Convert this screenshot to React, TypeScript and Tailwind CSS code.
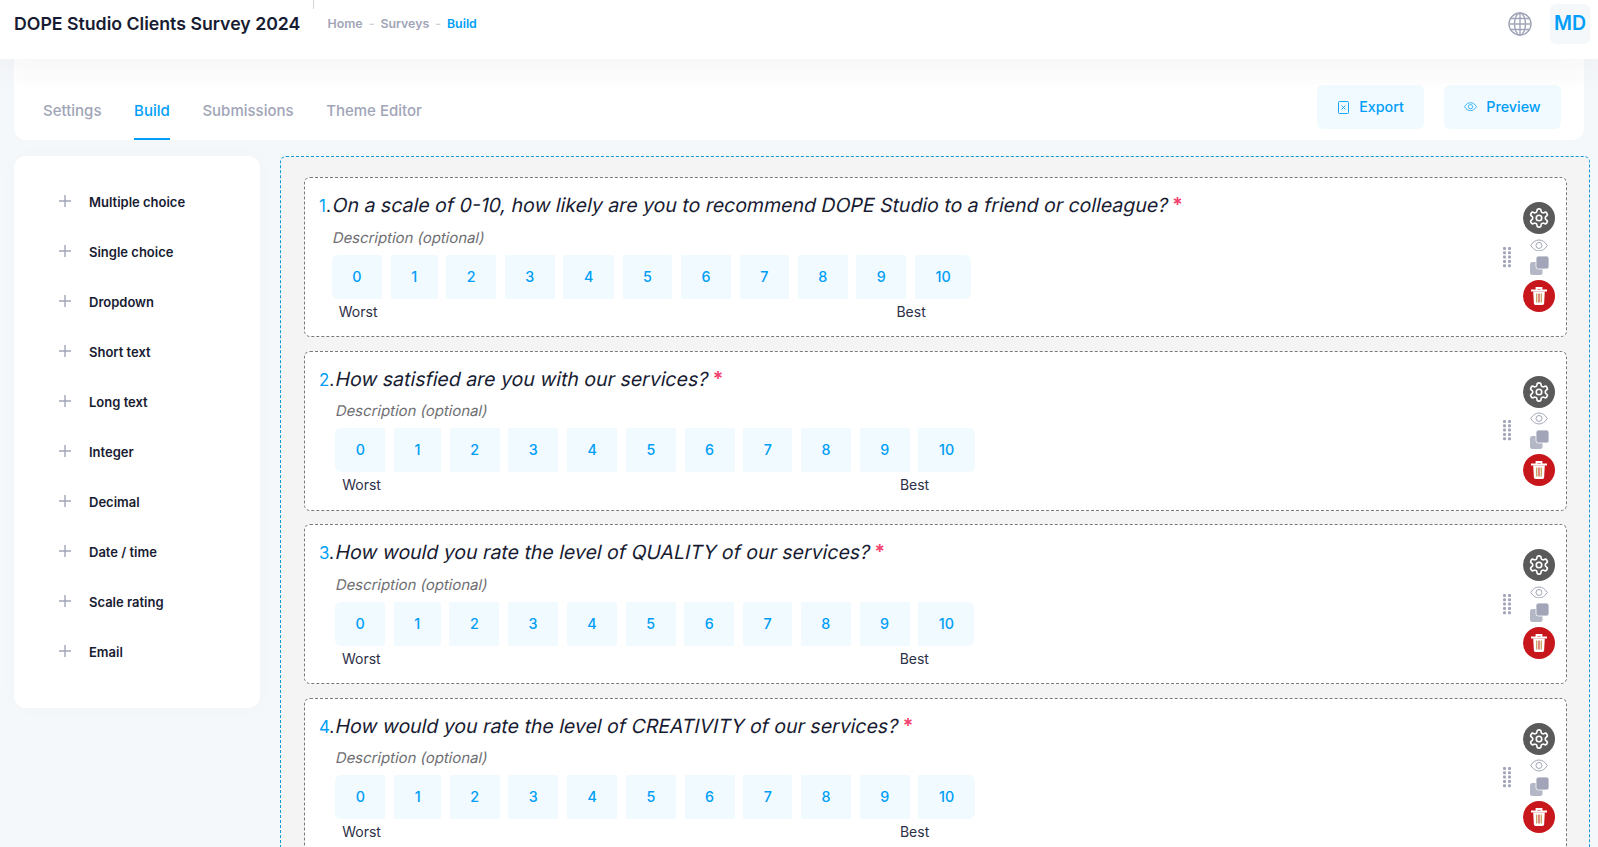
import React from "react";

const fields = ["Multiple choice","Single choice","Dropdown","Short text","Long text","Integer","Decimal","Date / time","Scale rating","Email"];
const questions = [
  "On a scale of 0-10, how likely are you to recommend DOPE Studio to a friend or colleague?",
  "How satisfied are you with our services?",
  "How would you rate the level of QUALITY of our services?",
  "How would you rate the level of CREATIVITY of our services?",
];
const scale = [0,1,2,3,4,5,6,7,8,9,10];

function Globe() {
  return (
    <svg width="24" height="24" viewBox="0 0 24 24" fill="none" stroke="#a1a5b7" strokeWidth="1.4">
      <circle cx="12" cy="12" r="11" />
      <ellipse cx="12" cy="12" rx="5.5" ry="11" />
      <path d="M12 1v22M1 12h22M2.5 6.5h19M2.5 17.5h19" />
    </svg>
  );
}
function Eye({ size = 18, color = "#a1a5b7" }: { size?: number; color?: string }) {
  return (
    <svg width={size} height={size * 0.72} viewBox="0 0 18 13" fill="none" stroke={color} strokeWidth="1">
      <path d="M.7 6.5C3 2.8 5.8 1 9 1s6 1.8 8.3 5.5C15 10.2 12.2 12 9 12S3 10.2.7 6.5z" />
      <circle cx="9" cy="6.5" r="3" />
    </svg>
  );
}
function Copy() {
  return (
    <svg width="19" height="19" viewBox="0 0 19 19">
      <rect x="0" y="6" width="12.5" height="13" rx="2.5" fill="#a1a5b7" opacity="0.8" />
      <rect x="6" y="0" width="13" height="13" rx="2.5" fill="#a1a5b7" stroke="#fff" strokeWidth="0.8" />
    </svg>
  );
}
function Gear() {
  return (
    <svg width="22" height="22" viewBox="0 0 24 24" fill="none" stroke="#fff" strokeWidth="1.8" strokeLinecap="round" strokeLinejoin="round">
      <path d="M12.22 2h-.44a2 2 0 0 0-2 2v.18a2 2 0 0 1-1 1.73l-.43.25a2 2 0 0 1-2 0l-.15-.08a2 2 0 0 0-2.73.73l-.22.38a2 2 0 0 0 .73 2.73l.15.1a2 2 0 0 1 1 1.72v.51a2 2 0 0 1-1 1.74l-.15.09a2 2 0 0 0-.73 2.73l.22.38a2 2 0 0 0 2.73.73l.15-.08a2 2 0 0 1 2 0l.43.25a2 2 0 0 1 1 1.73V20a2 2 0 0 0 2 2h.44a2 2 0 0 0 2-2v-.18a2 2 0 0 1 1-1.73l.43-.25a2 2 0 0 1 2 0l.15.08a2 2 0 0 0 2.73-.73l.22-.39a2 2 0 0 0-.73-2.73l-.15-.08a2 2 0 0 1-1-1.74v-.5a2 2 0 0 1 1-1.74l.15-.09a2 2 0 0 0 .73-2.73l-.22-.38a2 2 0 0 0-2.73-.73l-.15.08a2 2 0 0 1-2 0l-.43-.25a2 2 0 0 1-1-1.73V4a2 2 0 0 0-2-2z" />
      <circle cx="12" cy="12" r="3" />
    </svg>
  );
}
function Trash() {
  return (
    <svg width="18" height="20" viewBox="0 0 18 20">
      <path d="M1 4.5h16M6.5 4V2h5v2" stroke="#fff" strokeWidth="1.8" fill="none" />
      <path d="M3.2 5.5h11.6l-.7 12a1.5 1.5 0 0 1-1.5 1.4H5.4a1.5 1.5 0 0 1-1.5-1.4z" fill="#fff" />
      <rect x="6" y="7.5" width="1.4" height="9" fill="#c9a86a" />
      <rect x="8.3" y="7.5" width="1.4" height="9" fill="#d65a4a" />
      <rect x="10.6" y="7.5" width="1.4" height="9" fill="#c9a86a" />
    </svg>
  );
}
function Dots() {
  return (
    <svg width="8" height="21" viewBox="0 0 8 21" fill="#a1a5b7">
      {[1, 5.3, 9.6, 13.9, 18.2].map((y) => (
        <g key={y}>
          <rect x="0" y={y - 1} width="3" height="3" rx="1" />
          <rect x="5" y={y - 1} width="3" height="3" rx="1" />
        </g>
      ))}
    </svg>
  );
}

function Question({ n, text }: { n: number; text: string }) {
  return (
    <div className="flex justify-between h-[160px] shrink-0 bg-white border border-dashed border-[#7a7a7a] rounded-md pl-[14px] pr-[11px]">
      <div className="flex pt-[14px]">
        <div className="text-[16.900px] leading-[24px] h-[24px] pt-[2px] text-[#181c32]"><span className="text-[#009ef7]">{n}</span>.</div>
        <div className="flex flex-col">
          <div className="text-[19.500px] leading-[24px] pt-[1px] pl-[2px] text-[#181c32] flex">
            <span className="inline-block -skew-x-[12deg]">{text}</span><span className="text-[#f1416c] ml-[4px] font-semibold">*</span>
          </div>
          <div className="text-[14.900px] leading-[20px] mt-[10.500px] pl-[2px] text-[#6f6f73]"><span className="inline-block -skew-x-[12deg]">Description (optional)</span></div>
          <div className="flex gap-[8.700px] mt-[7px] ml-[1px]">
            {scale.map((v, i) => (
              <div key={v} className={"h-[44px] px-[20.500px] flex items-center bg-[#f1faff] text-[#009ef7] text-[14.300px] font-medium " + (i === 0 ? "rounded-l-md" : i === 10 ? "rounded-r-md" : "rounded-[1px]")}>{v}</div>
            ))}
          </div>
          <div className="flex justify-between w-[594px] pl-[7px] mt-[4px] ml-[1px] text-[14px] leading-[18px] text-[#2d3047]">
            <span>Worst</span><span>Best</span>
          </div>
        </div>
      </div>
      <div className="flex items-center gap-[12px]">
        <Dots />
        <div className="flex flex-col items-center w-[32px]">
          <div className="w-[32px] h-[32px] rounded-full bg-[#5a5a5a] flex items-center justify-center"><Gear /></div>
          <div className="h-[22px] flex items-center"><Eye /></div>
          <div className="h-[24px] flex items-start"><Copy /></div>
          <div className="w-[32px] h-[32px] rounded-full bg-[#c8171c] flex items-center justify-center"><Trash /></div>
        </div>
      </div>
    </div>
  );
}

export default function App() {
  return (
    <div className="h-screen overflow-hidden bg-[#f5f8fa] flex flex-col font-['Inter',sans-serif]">
      <header className="relative z-10 h-[59px] shrink-0 bg-white flex items-start pl-[14px] pr-[8px] shadow-[0_10px_30px_0_rgba(82,63,105,0.05)]">
        <h1 className="mt-[12px] text-[17.720px] leading-[24px] font-semibold text-[#181c32] w-[299px]">DOPE Studio Clients Survey 2024</h1>
        <div className="w-px h-[9px] bg-[#d4d4d8]" />
        <nav className="mt-[12px] ml-[13.500px] flex items-center gap-[6px] text-[12.350px] leading-[24px] font-semibold text-[#a1a5b7]">
          <span>Home</span><span className="text-[#cdd0da]">-</span><span>Surveys</span><span className="text-[#cdd0da]">-</span><span className="text-[#009ef7]">Build</span>
        </nav>
        <div className="ml-auto flex items-center gap-[18px] mt-[4px]">
          <Globe />
          <div className="w-[40px] h-[40px] rounded-md bg-[#f5f8fa] text-[#009ef7] text-[19.500px] font-semibold flex items-center justify-center">MD</div>
        </div>
      </header>

      <div className="flex-1 min-h-0 flex flex-col px-[14px]">
        <div className="h-[81px] shrink-0 bg-white rounded-b-xl flex items-stretch justify-between pl-[29px] pr-[23px]">
          <div className="flex gap-[32.600px] text-[15px] font-medium text-[#a1a5b7]">
            {["Settings","Build","Submissions","Theme Editor"].map((t) => (
              <div key={t} className={"pt-[41px] h-full " + (t === "Build" ? "text-[#009ef7] border-b-2 border-[#009ef7]" : "")}>{t}</div>
            ))}
          </div>
          <div className="flex gap-[20px] pt-[26px]">
            <div className="h-[44px] w-[107px] pl-[1px] rounded-md bg-[#f1faff] text-[#009ef7] text-[14.300px] font-medium flex items-center justify-center gap-[10px]">
              <svg width="11" height="13" viewBox="0 0 11 13" fill="none" stroke="#009ef7" strokeWidth="0.9"><rect x="0.5" y="0.5" width="10" height="12" rx="1"/><path d="M3.5 4.5l4 4M7.5 4.5l-4 4"/></svg>
              Export
            </div>
            <div className="h-[44px] w-[117px] rounded-md bg-[#f1faff] text-[#009ef7] text-[14.300px] font-medium flex items-center justify-center gap-[9px]">
              <Eye size={13} color="#009ef7" />
              Preview
            </div>
          </div>
        </div>

        <div className="flex-1 min-h-0 flex items-start gap-[20px] pt-[16px]">
          <aside className="w-[246px] h-[552px] shrink-0 bg-white rounded-xl pt-[22px] pl-[45px] shadow-[0_0_20px_0_rgba(76,87,125,0.02)]">
            {fields.map((f) => (
              <div key={f} className="h-[50px] flex items-center gap-[18px] text-[13px] font-semibold text-[#181c32]">
                <svg width="12" height="12" viewBox="0 0 12 12" stroke="#a1a5b7" strokeWidth="1.4" className="-mt-[4px]"><path d="M6 0v12M0 6h12"/></svg>
                {f}
              </div>
            ))}
          </aside>
          <main className="w-[1310px] h-[700px] shrink-0 bg-[#f4f4f4] border border-dashed border-[#0a9ad8] rounded-t-md pl-[23px] pr-[22px] pt-[20px] flex flex-col gap-[13.500px]">
            {questions.map((q, i) => <Question key={i} n={i + 1} text={q} />)}
          </main>
        </div>
      </div>
    </div>
  );
}
